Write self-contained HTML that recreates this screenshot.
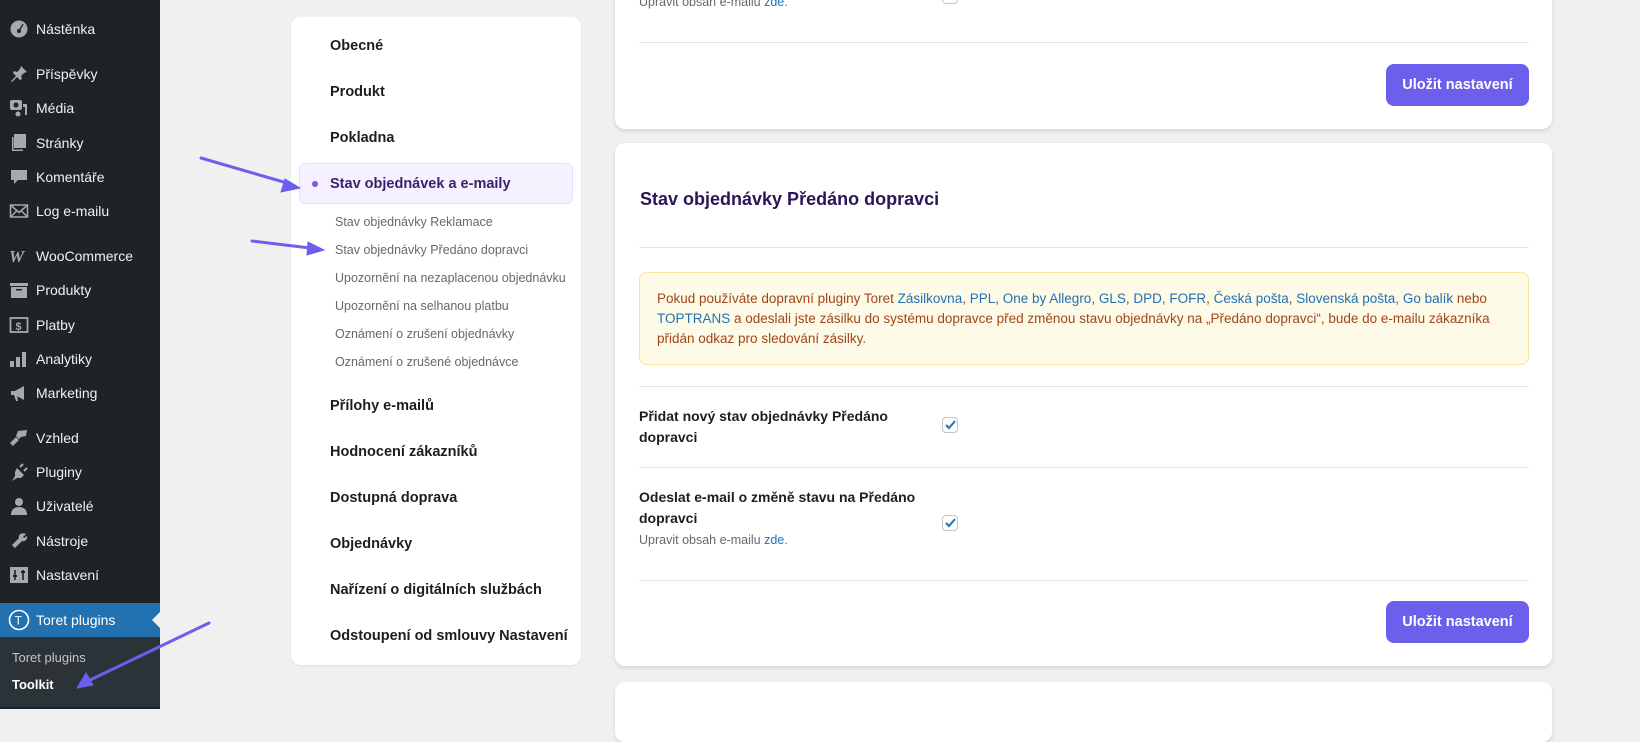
<!DOCTYPE html>
<html><head><meta charset="utf-8">
<style>
*{box-sizing:border-box;margin:0;padding:0}
body{width:1640px;height:709px;overflow:hidden;background:#f0f0f1;font-family:"Liberation Sans",sans-serif;position:relative}
.abs{position:absolute}
#side{left:0;top:0;width:160px;height:709px;background:#1d2327}
.mi{position:absolute;left:36px;color:#f0f0f1;font-size:14px;line-height:20px;transform:translateY(-10px)}
.ic{position:absolute;left:9px;width:20px;height:20px;transform:translateY(-10px)}
.card{position:absolute;background:#fff;border-radius:10px;box-shadow:0 2px 4px rgba(0,0,0,.12)}
.nav{position:absolute;left:330px;font-size:14.5px;font-weight:bold;color:#1e1e1e;transform:translateY(-9px);line-height:18px}
.sub{position:absolute;left:335px;font-size:12.5px;color:#646970;transform:translateY(-8px);line-height:16px}
.hr{position:absolute;left:639px;width:890px;height:1px;background:#e4e4e7}
.btn{position:absolute;left:1386px;width:143px;height:42px;background:#6c5fec;border-radius:8px;color:#fff;font-weight:bold;font-size:14.5px;line-height:42px;text-align:center}
.lab{position:absolute;left:639px;font-size:14px;font-weight:bold;color:#1e1e1e;line-height:21px}
.cb{position:absolute;left:942px;width:16px;height:16px;border:1px solid #c3c4c7;border-radius:4px;background:#fff}
a{color:#2271b1;text-decoration:none}
</style></head><body>
<div id="side" class="abs">
  <svg class="ic" style="top:29px" viewBox="0 0 20 20"><circle cx="10" cy="10" r="8.5" fill="#a7aaad"/><circle cx="10" cy="12" r="2" fill="#1d2327"/><rect x="9.3" y="4" width="1.4" height="7" fill="#1d2327" transform="rotate(30 10 12)"/></svg>
  <div class="mi" style="top:29px">Nástěnka</div>
  <svg class="ic" style="top:74px" viewBox="0 0 20 20"><path d="M12 2l6 6-3 1-3 3 1 3-2 1-3-3-5 5-1-1 5-5-3-3 1-2 3 1 3-3z" fill="#a7aaad"/></svg>
  <div class="mi" style="top:74px">Příspěvky</div>
  <svg class="ic" style="top:108px" viewBox="0 0 20 20"><rect x="1" y="2" width="12" height="10" rx="2" fill="#a7aaad"/><circle cx="7" cy="7" r="2.5" fill="#1d2327"/><path d="M14 6h4v11h-2V9h-2z" fill="#a7aaad"/><circle cx="9" cy="16" r="2.5" fill="#a7aaad"/></svg>
  <div class="mi" style="top:108px">Média</div>
  <svg class="ic" style="top:143px" viewBox="0 0 20 20"><rect x="5" y="1" width="12" height="14" fill="#a7aaad"/><path d="M3 4v14h11v-1.5H4.5V4z" fill="#a7aaad"/></svg>
  <div class="mi" style="top:143px">Stránky</div>
  <svg class="ic" style="top:177px" viewBox="0 0 20 20"><path d="M2 3h16v10h-9l-4 4v-4H2z" fill="#a7aaad"/></svg>
  <div class="mi" style="top:177px">Komentáře</div>
  <svg class="ic" style="top:211px" viewBox="0 0 20 20"><rect x="1.5" y="4" width="17" height="12" fill="none" stroke="#a7aaad" stroke-width="1.5"/><path d="M2 4.5l8 7 8-7M2 15.5l6-6M18 15.5l-6-6" stroke="#a7aaad" stroke-width="1.5" fill="none"/></svg>
  <div class="mi" style="top:211px">Log e-mailu</div>
  <svg class="ic" style="top:256px" viewBox="0 0 20 20"><text x="0" y="16" font-size="17" font-weight="bold" font-style="italic" fill="#a7aaad" font-family="Liberation Serif">W</text></svg>
  <div class="mi" style="top:256px">WooCommerce</div>
  <svg class="ic" style="top:290px" viewBox="0 0 20 20"><rect x="1" y="3" width="18" height="3" fill="#a7aaad"/><rect x="2" y="7" width="16" height="11" fill="#a7aaad"/><rect x="7" y="9" width="6" height="1.5" fill="#1d2327"/></svg>
  <div class="mi" style="top:290px">Produkty</div>
  <svg class="ic" style="top:325px" viewBox="0 0 20 20"><rect x="1.5" y="3" width="17" height="14" fill="none" stroke="#a7aaad" stroke-width="1.8"/><text x="6.5" y="15" font-size="11" font-weight="bold" fill="#a7aaad">$</text></svg>
  <div class="mi" style="top:325px">Platby</div>
  <svg class="ic" style="top:359px" viewBox="0 0 20 20"><rect x="1" y="12" width="4" height="6" fill="#a7aaad"/><rect x="7" y="8" width="4" height="10" fill="#a7aaad"/><rect x="13" y="3" width="4" height="15" fill="#a7aaad"/></svg>
  <div class="mi" style="top:359px">Analytiky</div>
  <svg class="ic" style="top:393px" viewBox="0 0 20 20"><path d="M2 8h4l9-5v14l-9-5H2z" fill="#a7aaad"/><path d="M5 12l2 6h2l-1-6z" fill="#a7aaad"/></svg>
  <div class="mi" style="top:393px">Marketing</div>
  <svg class="ic" style="top:438px" viewBox="0 0 20 20"><path d="M9 3l9-1-1 6-5 1-2 2-3-3z" fill="#a7aaad"/><path d="M7 9l3 3-6 6-3-3z" fill="#a7aaad"/></svg>
  <div class="mi" style="top:438px">Vzhled</div>
  <svg class="ic" style="top:472px" viewBox="0 0 20 20"><path d="M8 6l7 7-3 3h-4l-5 3 3-5v-4z" fill="#a7aaad"/><path d="M11 5l3-3M15 9l3-3" stroke="#a7aaad" stroke-width="2"/></svg>
  <div class="mi" style="top:472px">Pluginy</div>
  <svg class="ic" style="top:506px" viewBox="0 0 20 20"><circle cx="10" cy="6" r="4" fill="#a7aaad"/><path d="M2 19c0-6 4-8 8-8s8 2 8 8z" fill="#a7aaad"/></svg>
  <div class="mi" style="top:506px">Uživatelé</div>
  <svg class="ic" style="top:541px" viewBox="0 0 20 20"><path d="M17 3l-3 3 1 1 3-2c1 3-2 6-5 5l-7 7-3-3 7-7c-1-3 2-6 7-4z" fill="#a7aaad"/></svg>
  <div class="mi" style="top:541px">Nástroje</div>
  <svg class="ic" style="top:575px" viewBox="0 0 20 20"><rect x="1" y="2" width="18" height="16" fill="#a7aaad"/><path d="M6 5v10M14 5v10" stroke="#1d2327" stroke-width="1.6"/><rect x="4" y="10" width="4" height="2" fill="#1d2327"/><rect x="12" y="6" width="4" height="2" fill="#1d2327"/></svg>
  <div class="mi" style="top:575px">Nastavení</div>
  <div class="abs" style="left:0;top:603px;width:160px;height:34px;background:#2271b1"></div>
  <svg class="abs" style="left:152px;top:612px" width="8" height="16" viewBox="0 0 8 16"><path d="M8 0L0 8l8 8z" fill="#f0f0f1"/></svg>
  <svg class="ic" style="top:620px;left:8px;width:22px;height:22px;transform:translateY(-11px)" viewBox="0 0 22 22"><circle cx="11" cy="11" r="9.5" fill="none" stroke="#fff" stroke-width="1.6"/><text x="6.6" y="15.5" font-size="12" fill="#fff">T</text></svg>
  <div class="mi" style="top:620px;color:#fff">Toret plugins</div>
  <div class="abs" style="left:0;top:637px;width:160px;height:70px;background:#2c3338"></div>
  <div class="mi" style="top:658px;left:12px;font-size:13px;color:#c3c4c7">Toret plugins</div>
  <div class="mi" style="top:685px;left:12px;font-size:13px;color:#fff;font-weight:bold">Toolkit</div>
</div>

<div class="card" style="left:291px;top:17px;width:290px;height:648px;box-shadow:0 1px 2px rgba(0,0,0,.06)"></div>
<div class="nav" style="top:46px">Obecné</div>
<div class="nav" style="top:92px">Produkt</div>
<div class="nav" style="top:138px">Pokladna</div>
<div class="abs" style="left:299px;top:163px;width:274px;height:41px;background:#f6f1fe;border:1px solid #e6dcfb;border-radius:6px"></div>
<div class="abs" style="left:312px;top:181px;width:6px;height:6px;border-radius:50%;background:#7b5ee0"></div>
<div class="nav" style="top:184px;color:#3a1f6e">Stav objednávek a e-maily</div>
<div class="sub" style="top:222px">Stav objednávky Reklamace</div>
<div class="sub" style="top:250px">Stav objednávky Předáno dopravci</div>
<div class="sub" style="top:278px">Upozornění na nezaplacenou objednávku</div>
<div class="sub" style="top:306px">Upozornění na selhanou platbu</div>
<div class="sub" style="top:334px">Oznámení o zrušení objednávky</div>
<div class="sub" style="top:362px">Oznámení o zrušené objednávce</div>
<div class="nav" style="top:406px">Přílohy e-mailů</div>
<div class="nav" style="top:452px">Hodnocení zákazníků</div>
<div class="nav" style="top:498px">Dostupná doprava</div>
<div class="nav" style="top:544px">Objednávky</div>
<div class="nav" style="top:590px">Nařízení o digitálních službách</div>
<div class="nav" style="top:636px">Odstoupení od smlouvy Nastavení</div>

<div class="card" style="left:615px;top:-20px;width:937px;height:149px"></div>
<div class="abs" style="left:639px;top:-5px;font-size:12.5px;color:#646970">Upravit obsah e-mailu <a>zde</a>.</div>
<div class="cb" style="top:-12px"></div>
<div class="hr" style="top:42px"></div>
<div class="btn" style="top:64px">Uložit nastavení</div>

<div class="card" style="left:615px;top:143px;width:937px;height:523px"></div>
<div class="abs" style="left:640px;top:189px;font-size:18px;font-weight:700;color:#2b1558">Stav objednávky Předáno dopravci</div>
<div class="hr" style="top:247px"></div>
<div class="abs" style="left:639px;top:272px;width:890px;height:93px;background:#fefae8;border:1px solid #f8e39a;border-radius:8px;padding:16px 17px 0 17px;font-size:13.5px;line-height:20px;color:#a0461a">Pokud používáte dopravní pluginy Toret <a>Zásilkovna</a>, <a>PPL</a>, <a>One by Allegro</a>, <a>GLS</a>, <a>DPD</a>, <a>FOFR</a>, <a>Česká pošta</a>, <a>Slovenská pošta</a>, <a>Go balík</a> nebo <a>TOPTRANS</a> a odeslali jste zásilku do systému dopravce před změnou stavu objednávky na „Předáno dopravci“, bude do e-mailu zákazníka přidán odkaz pro sledování zásilky.</div>
<div class="hr" style="top:386px"></div>
<div class="lab" style="top:406px">Přidat nový stav objednávky Předáno<br>dopravci</div>
<div class="cb" style="top:417px"></div>
<svg class="abs" style="left:945px;top:420px" width="11" height="10" viewBox="0 0 11 10"><path d="M1 5l3 3 6-7" stroke="#2271b1" stroke-width="2" fill="none"/></svg>
<div class="hr" style="top:467px"></div>
<div class="lab" style="top:487px">Odeslat e-mail o změně stavu na Předáno<br>dopravci</div>
<div class="cb" style="top:515px"></div>
<svg class="abs" style="left:945px;top:518px" width="11" height="10" viewBox="0 0 11 10"><path d="M1 5l3 3 6-7" stroke="#2271b1" stroke-width="2" fill="none"/></svg>
<div class="abs" style="left:639px;top:533px;font-size:12.5px;color:#646970">Upravit obsah e-mailu <a>zde</a>.</div>
<div class="hr" style="top:580px"></div>
<div class="btn" style="top:601px">Uložit nastavení</div>

<div class="card" style="left:615px;top:682px;width:937px;height:60px"></div>

<svg class="abs" style="left:0;top:0" width="1640" height="709">
  <g stroke="#6c5fec" stroke-width="3" stroke-linecap="round" fill="#6c5fec">
    <line x1="201" y1="158" x2="287" y2="183"/>
    <path d="M300 188l-19 4 4-13z" stroke-width="1"/>
    <line x1="252" y1="241" x2="310" y2="248"/>
    <path d="M324 250l-17 5 1-13z" stroke-width="1"/>
    <line x1="209" y1="623" x2="90" y2="680"/>
    <path d="M77 688l9-15 7 12z" stroke-width="1"/>
  </g>
</svg>
</body></html>
